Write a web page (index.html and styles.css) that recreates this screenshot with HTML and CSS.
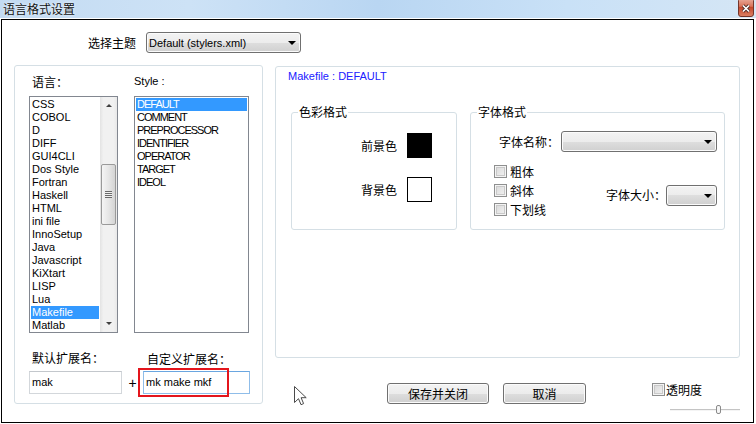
FILE: index.html
```html
<!DOCTYPE html>
<html lang="zh-CN">
<head>
    <meta charset="UTF-8">
    <meta name="viewport" content="width=device-width, initial-scale=1.0">
    <title>语言格式设置</title>
    <link rel="stylesheet" href="styles.css">
</head>
<body>
    <div class="titlebar">
        <span class="title">语言格式设置</span>
        <span class="close-btn">
            <svg width="16" height="17" viewBox="0 0 16 17">
                <defs>
                    <linearGradient id="closeGrad" x1="0" y1="0" x2="0" y2="1">
                        <stop offset="0" stop-color="#eab0a0"/>
                        <stop offset="0.45" stop-color="#d8735a"/>
                        <stop offset="0.5" stop-color="#c4472a"/>
                        <stop offset="1" stop-color="#dc8266"/>
                    </linearGradient>
                </defs>
                <rect x="0.5" y="-2" width="15" height="18.5" rx="2.5" fill="url(#closeGrad)" stroke="#74352a"/>
                <path d="M5 5.5l6 6M11 5.5l-6 6" stroke="#4a2a26" stroke-width="3.2"/>
                <path d="M5 5.5l6 6M11 5.5l-6 6" stroke="#fff" stroke-width="1.7"/>
            </svg>
        </span>
    </div>

    <div class="window">
        <div class="theme-row">
            <span class="cjk">选择主题</span>
            <div class="combo theme-combo"><span>Default (stylers.xml)</span><i class="arrow"></i></div>
        </div>

        <div class="main">
            <div class="group lang-group">
                <div class="lists">
                    <div class="col">
                        <div class="col-label cjk">语言：</div>
                        <div class="listbox lang-list">
                            <ul class="items">
                                <li>CSS</li>
                                <li>COBOL</li>
                                <li>D</li>
                                <li>DIFF</li>
                                <li>GUI4CLI</li>
                                <li>Dos Style</li>
                                <li>Fortran</li>
                                <li>Haskell</li>
                                <li>HTML</li>
                                <li>ini file</li>
                                <li>InnoSetup</li>
                                <li>Java</li>
                                <li>Javascript</li>
                                <li>KiXtart</li>
                                <li>LISP</li>
                                <li>Lua</li>
                                <li class="selected">Makefile</li>
                                <li>Matlab</li>
                            </ul>
                            <div class="scrollbar">
                                <div class="sb-btn"><i class="up"></i></div>
                                <div class="sb-track"><div class="sb-thumb"><i class="grip"></i></div></div>
                                <div class="sb-btn"><i class="down"></i></div>
                            </div>
                        </div>
                    </div>
                    <div class="col">
                        <div class="col-label latin">Style :</div>
                        <div class="listbox style-list">
                            <ul class="items">
                                <li class="selected">DEFAULT</li>
                                <li>COMMENT</li>
                                <li>PREPROCESSOR</li>
                                <li>IDENTIFIER</li>
                                <li>OPERATOR</li>
                                <li>TARGET</li>
                                <li>IDEOL</li>
                            </ul>
                        </div>
                    </div>
                </div>

                <div class="ext">
                    <span class="ext-label cjk">默认扩展名：</span>
                    <span></span>
                    <span class="ext-label user cjk">自定义扩展名：</span>
                    <div class="textbox">mak</div>
                    <span class="plus">+</span>
                    <div class="textbox focused">mk make mkf<span class="mark"></span></div>
                </div>
            </div>

            <div class="right-col">
                <div class="group style-group">
                    <div class="style-title">Makefile : DEFAULT</div>
                    <div class="subgroups">
                        <fieldset class="sub color-box">
                            <legend class="cjk">色彩格式</legend>
                            <div class="color-grid cjk">
                                <span>前景色</span><span class="swatch fg"></span>
                                <span>背景色</span><span class="swatch bg"></span>
                            </div>
                        </fieldset>
                        <fieldset class="sub font-box">
                            <legend class="cjk">字体格式</legend>
                            <div class="font-name">
                                <span class="cjk">字体名称：</span>
                                <div class="combo name-combo"><span></span><i class="arrow"></i></div>
                            </div>
                            <div class="font-opts">
                                <div class="checks">
                                    <label class="check cjk"><span class="box"></span>粗体</label>
                                    <label class="check cjk"><span class="box"></span>斜体</label>
                                    <label class="check cjk"><span class="box"></span>下划线</label>
                                </div>
                                <div class="font-size">
                                    <span class="cjk">字体大小：</span>
                                    <div class="combo size-combo"><span></span><i class="arrow"></i></div>
                                </div>
                            </div>
                        </fieldset>
                    </div>
                </div>

                <div class="actions">
                    <button class="btn save cjk">保存并关闭</button>
                    <button class="btn cancel cjk">取消</button>
                    <div class="opacity">
                        <label class="check cjk"><span class="box"></span>透明度</label>
                        <div class="slider"><span class="thumb"></span></div>
                    </div>
                </div>
            </div>
        </div>

        <svg class="cursor" width="13" height="21" viewBox="0 0 13 21">
            <path d="M0.5 0.5V16.5L4.5 12.7L7 18.7L9.6 17.6L7.1 11.7H12.2Z" fill="#fff" stroke="#4a4a4a"/>
        </svg>
    </div>
</body>
</html>
```

FILE: styles.css
```css
* {
    box-sizing: border-box;
}
body {
    margin: 0;
    width: 756px;
    height: 424px;
    overflow: hidden;
    background: #fff;
    font-family: "Liberation Sans", "Noto Sans CJK SC", sans-serif;
    font-size: 11px;
    color: #000;
}
.cjk {
    font-family: "Noto Sans CJK SC", sans-serif;
    font-size: 12px;
    line-height: 12px;
}

/* title bar */
.titlebar {
    height: 18px;
    display: flex;
    justify-content: space-between;
    background: linear-gradient(to right, #c3dbf2 0%, #cde2f6 25%, #b9d6f2 50%, #c9e1f7 75%, #d5e6f5 100%);
}
.title {
    font-family: "Noto Sans CJK SC", sans-serif;
    font-size: 12px;
    line-height: 17px;
    padding-left: 3px;
    color: #111;
    text-shadow: 0 0 3px #fff;
}
.close-btn {
    width: 16px;
    height: 17px;
    margin-right: 2px;
}
.close-btn svg {
    display: block;
}

/* window body */
.window {
    position: relative;
    margin: 1px 0 0 1px;
    width: 753px;
    height: 404px;
    border: 1px solid #000;
}
.theme-row {
    display: flex;
    align-items: center;
    gap: 10px;
    height: 33px;
    padding: 12px 0 0 86px;
}

.combo {
    display: flex;
    align-items: center;
    justify-content: space-between;
    height: 21px;
    padding: 0 4px 0 2px;
    border: 1px solid #707070;
    border-radius: 3px;
    background: linear-gradient(#f3f3f3 0%, #ececec 50%, #dedede 50%, #d0d0d0 100%);
    box-shadow: inset 0 0 0 1px #fbfbfb;
}
.arrow {
    width: 0;
    height: 0;
    border-left: 4px solid transparent;
    border-right: 4px solid transparent;
    border-top: 4px solid #000;
    margin-top: 1px;
}
.theme-combo {
    width: 155px;
}
.name-combo {
    width: 156px;
}
.size-combo {
    width: 51px;
}

.main {
    display: flex;
    gap: 12px;
    margin-top: 12px;
    padding-left: 12px;
}
.group {
    border: 1px solid #d5dfe5;
    border-radius: 3px;
}

/* left group */
.lang-group {
    width: 249px;
    height: 339px;
    padding-left: 14px;
}
.lists {
    display: flex;
    gap: 16px;
}
.col-label {
    height: 30px;
    padding: 10px 0 0 3px;
}
.col-label.latin {
    padding-left: 0;
    font-size: 11px;
    line-height: 13px;
    padding-top: 9px;
}
.listbox {
    display: flex;
    height: 237px;
    border: 1px solid #828790;
    background: #fff;
}
.lang-list {
    width: 89px;
}
.style-list {
    width: 115px;
}
.items {
    flex: 1;
    margin: 0;
    padding: 1px;
    list-style: none;
    overflow: hidden;
}
.items li {
    height: 13px;
    line-height: 13px;
    padding-left: 1px;
    white-space: nowrap;
}
.style-list .items li {
    letter-spacing: -1px;
}
.items li.selected {
    background: #3399ff;
    color: #fff;
}

.scrollbar {
    width: 17px;
    display: flex;
    flex-direction: column;
    background: linear-gradient(to right, #e3e3e3, #f1f1f1 20%, #f1f1f1 80%, #e8e8e8);
}
.sb-btn {
    height: 17px;
    display: flex;
    align-items: center;
    justify-content: center;
}
.sb-btn i {
    width: 0;
    height: 0;
    border-left: 3px solid transparent;
    border-right: 3px solid transparent;
}
.sb-btn .up {
    border-bottom: 3px solid #404040;
}
.sb-btn .down {
    border-top: 3px solid #404040;
}
.sb-track {
    flex: 1;
}
.sb-thumb {
    margin: 50px 1px 0;
    height: 61px;
    border: 1px solid #9a9a9a;
    border-radius: 2px;
    background: linear-gradient(to right, #f5f5f5, #e6e6e6 50%, #d4d4d4);
    display: flex;
    align-items: center;
    justify-content: center;
}
.grip {
    width: 7px;
    height: 7px;
    background: repeating-linear-gradient(#6a6a6a 0, #6a6a6a 1px, #f0f0f0 1px, #f0f0f0 2px);
}

.ext {
    display: grid;
    grid-template-columns: 93px 21px 107px;
    row-gap: 6px;
    margin-top: 19px;
    align-items: center;
}
.ext-label {
    padding-left: 3px;
    white-space: nowrap;
}
.ext-label.user {
    padding-left: 4px;
    position: relative;
    top: 1px;
}
.plus {
    text-align: center;
    font-size: 14px;
    line-height: 23px;
    padding-top: 2px;
}
.textbox {
    height: 23px;
    line-height: 21px;
    padding-left: 2px;
    border: 1px solid #d3d7db;
    border-top-color: #c3c7cc;
    background: #fff;
}
.textbox.focused {
    position: relative;
    border-color: #8fbde9;
    border-top-color: #6aa6e0;
}
.mark {
    position: absolute;
    left: -6px;
    top: -4px;
    width: 91px;
    height: 29px;
    border: 2px solid #e4151c;
}

/* right group */
.right-col {
    width: 465px;
    display: flex;
    flex-direction: column;
}
.style-group {
    height: 292px;
    margin-top: 1px;
}
.style-title {
    color: #2020ff;
    padding: 3px 0 0 12px;
    line-height: 13px;
}
.subgroups {
    display: flex;
    gap: 13px;
    margin-top: 23px;
    padding-left: 15px;
}
.sub {
    margin: 0;
    padding: 0;
    min-width: 0;
    border: 1px solid #d5dfe5;
    border-radius: 3px;
    height: 124px;
}
.sub legend {
    padding: 0 1px;
    margin-left: 6px;
}
.color-box {
    width: 166px;
}
.font-box {
    width: 255px;
}
.color-grid {
    display: grid;
    grid-template-columns: auto 25px;
    justify-content: start;
    align-items: center;
    column-gap: 10px;
    row-gap: 19px;
    padding: 15px 0 0 69px;
}
.swatch {
    width: 25px;
    height: 25px;
    border: 1px solid #000;
}
.swatch.fg {
    background: #000;
}
.swatch.bg {
    background: #fff;
}

.font-name {
    display: flex;
    align-items: center;
    gap: 2px;
    margin-top: 13px;
    padding-left: 28px;
}
.font-opts {
    display: flex;
    margin-top: 13px;
    padding: 0 7px 0 23px;
}
.checks {
    display: flex;
    flex-direction: column;
    gap: 6px;
}
.check {
    display: flex;
    align-items: center;
    gap: 3px;
    height: 13px;
}
.box {
    width: 13px;
    height: 13px;
    border: 1px solid #8e8f8f;
    background: linear-gradient(135deg, #d6d6d6, #f4f4f4);
    box-shadow: inset 0 0 0 1px #f4f4f4, inset 0 0 0 2px #c9c9c9;
}
.font-size {
    display: flex;
    align-items: center;
    gap: 0;
    margin: 9px 0 0 auto;
}

/* bottom buttons */
.actions {
    display: flex;
    align-items: flex-start;
    gap: 14px;
    margin-top: 25px;
    padding-left: 112px;
}
.btn {
    height: 21px;
    padding: 0;
    border: 1px solid #707070;
    border-radius: 3px;
    background: linear-gradient(#f3f3f3 0%, #ececec 50%, #dedede 50%, #d0d0d0 100%);
    box-shadow: inset 0 0 0 1px #fbfbfb;
    color: #000;
}
.btn.save {
    width: 102px;
}
.btn.cancel {
    width: 83px;
}
.opacity {
    margin-left: auto;
    width: 88px;
    display: flex;
    flex-direction: column;
}
.opacity .check {
    gap: 1px;
}
.slider {
    position: relative;
    align-self: flex-end;
    width: 70px;
    height: 9px;
    margin-top: 9px;
    display: flex;
    align-items: center;
}
.slider::before {
    content: "";
    flex: 1;
    height: 2px;
    background: linear-gradient(#c4c4c4 50%, #f4f4f4 50%);
}
.thumb {
    position: absolute;
    left: 46px;
    top: 0;
    width: 5px;
    height: 9px;
    border: 1px solid #8a8a8a;
    border-radius: 2px;
    background: #f6f6f6;
}

.cursor {
    position: absolute;
    left: 292px;
    top: 366px;
}
```
